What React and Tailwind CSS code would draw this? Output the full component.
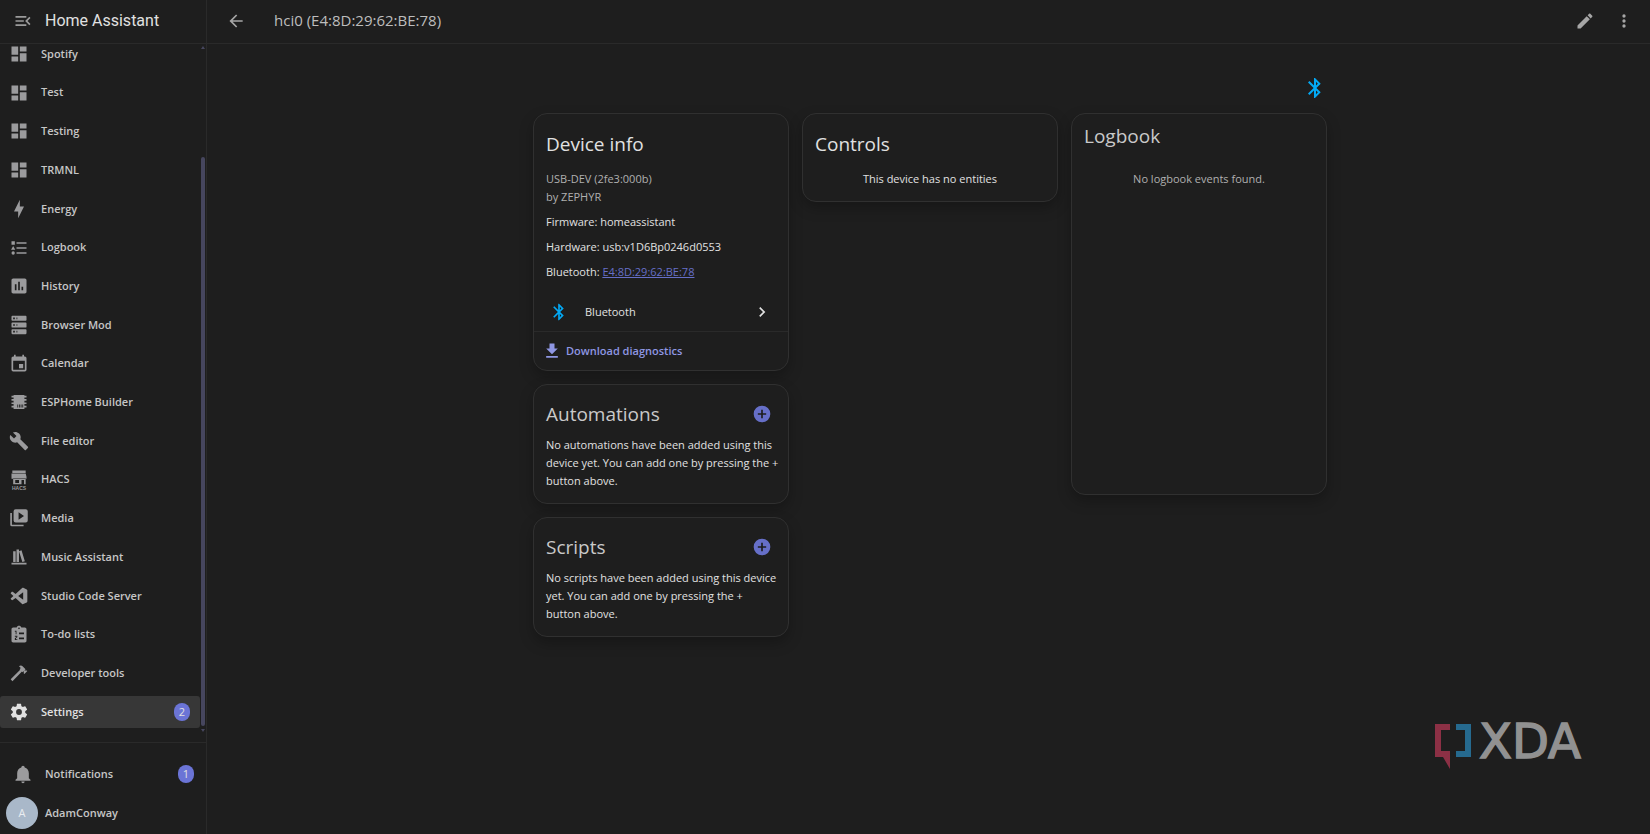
import React from 'react';

const icons = {
  dashboard: 'M13,3V9H21V3M13,21H21V11H13M3,21H11V15H3M3,13H11V3H3V13Z',
  energy: 'M11 15H6L13 1V9H18L11 23V15Z',
  logbook: 'M5,9.5L7.5,14H2.5L5,9.5M3,4H7V8H3V4M5,20A2,2 0 0,0 7,18A2,2 0 0,0 5,16A2,2 0 0,0 3,18A2,2 0 0,0 5,20M9,5V7H21V5H9M9,19H21V17H9V19M9,13H21V11H9V13Z',
  history: 'M19 3H5C3.9 3 3 3.9 3 5V19C3 20.1 3.9 21 5 21H19C20.1 21 21 20.1 21 19V5C21 3.9 20.1 3 19 3M9 17H7V10H9V17M13 17H11V7H13V17M17 17H15V13H17V17Z',
  server: 'M4,1H20A1,1 0 0,1 21,2V6A1,1 0 0,1 20,7H4A1,1 0 0,1 3,6V2A1,1 0 0,1 4,1M4,9H20A1,1 0 0,1 21,10V14A1,1 0 0,1 20,15H4A1,1 0 0,1 3,14V10A1,1 0 0,1 4,9M4,17H20A1,1 0 0,1 21,18V22A1,1 0 0,1 20,23H4A1,1 0 0,1 3,22V18A1,1 0 0,1 4,17M9,5H10V3H9V5M9,13H10V11H9V13M9,21H10V19H9V21M5,3V5H7V3H5M5,11V13H7V11H5M5,19V21H7V19H5Z',
  calendar: 'M19,19H5V8H19M16,1V3H8V1H6V3H5C3.89,3 3,3.89 3,5V19A2,2 0 0,0 5,21H19A2,2 0 0,0 21,19V5C21,3.89 20.1,3 19,3H18V1M17,12H12V17H17V12Z',
  chip: 'M5.500 3.500H18.500V4.500H21V6.500H18.500V8.500H21V10.500H18.500V12.500H21V14.500H18.500V16.500H21V18.500H18.500V20.500H5.500V18.500H3V16.500H5.500V14.500H3V12.500H5.500V10.500H3V8.500H5.500V6.500H3V4.500H5.500V3.500M10 15V18.500H11V15H10M12 15V18.500H13V15H12M14 15V18.500H15V15H14M16 15V18.500H17V15H16Z',
  wrench: 'M22.7,19L13.6,9.9C14.5,7.6 14,4.9 12.1,3C10.1,1 7.1,0.6 4.7,1.7L9,6L6,9L1.6,4.7C0.4,7.1 0.9,10.1 2.9,12.1C4.8,14 7.5,14.5 9.8,13.6L18.9,22.7C19.3,23.1 19.9,23.1 20.3,22.7L22.6,20.4C23.1,20 23.1,19.3 22.7,19Z',
  media: 'M3.500,6H1.500V20A2,2 0 0,0 3.500,22H17.500V20H3.500V6M20,1.500H8A2.500,2.500 0 0,0 5.500,4V15A2.500,2.500 0 0,0 8,17.500H20A2.500,2.500 0 0,0 22.500,15V4A2.500,2.500 0 0,0 20,1.500M11.500,14V5L18,9.5L11.500,14Z',
  bookshelf: 'M9 3V18H12V3H9M12 5L16 18L19 17L15 4L12 5M5 5V18H8V5H5M3 19V21H21V19H3Z',
  vscode: 'M21.29 4.1L17.17 2.12C16.7 1.89 16.13 2 15.76 2.36L7.89 9.53L4.47 6.93C4.15 6.69 3.7 6.71 3.41 6.97L2.31 7.97C1.94 8.3 1.94 8.87 2.31 9.2L5.28 11.9L2.31 14.6C1.94 14.93 1.94 15.5 2.31 15.83L3.41 16.83C3.7 17.1 4.15 17.12 4.47 16.88L7.89 14.27L15.76 21.45C16.13 21.81 16.7 21.91 17.17 21.69L21.29 19.7C21.72 19.5 22 19.06 22 18.58V5.22C22 4.74 21.72 4.3 21.29 4.1M17 16.46L11.03 11.93L17 7.4V16.46Z',
  todo: 'M19 3H14.82C14.4 1.84 13.3 1 12 1S9.6 1.84 9.18 3H5C3.9 3 3 3.9 3 5V19C3 20.1 3.9 21 5 21H19C20.1 21 21 20.1 21 19V5C21 3.9 20.1 3 19 3M12 3A1 1 0 1 1 12 5A1 1 0 1 1 12 3M7 7H9V11H8V8H7V7M10 17V18H7V16L9 14.3V14H7V13H10V14.6L8.4 16V17H10M18 17H12V15H18V17M18 11H12V9H18V11Z',
  hammer: 'M2,19.63L13.43,8.2L12.72,7.5L14.14,6.07L12,3.89C13.2,2.7 15.09,2.7 16.27,3.89L19.87,7.5L18.45,8.91H21.29L22,9.62L18.45,13.21L17.74,12.5V9.62L16.27,11.04L15.56,10.33L4.13,21.76L2,19.63Z',
  cog: 'M12,15.5A3.5,3.5 0 0,1 8.5,12A3.5,3.5 0 0,1 12,8.5A3.5,3.5 0 0,1 15.5,12A3.5,3.5 0 0,1 12,15.5M19.43,12.97C19.47,12.65 19.5,12.33 19.5,12C19.5,11.67 19.47,11.34 19.43,11L21.54,9.37C21.73,9.22 21.78,8.95 21.66,8.73L19.66,5.27C19.54,5.05 19.27,4.96 19.05,5.05L16.56,6.05C16.04,5.66 15.5,5.32 14.87,5.07L14.5,2.42C14.46,2.18 14.25,2 14,2H10C9.75,2 9.54,2.18 9.5,2.42L9.13,5.07C8.5,5.32 7.96,5.66 7.44,6.05L4.95,5.05C4.73,4.96 4.46,5.05 4.34,5.27L2.34,8.73C2.21,8.95 2.27,9.22 2.46,9.37L4.57,11C4.53,11.34 4.5,11.67 4.5,12C4.5,12.33 4.53,12.65 4.57,12.97L2.46,14.63C2.27,14.78 2.21,15.05 2.34,15.27L4.34,18.73C4.46,18.95 4.73,19.03 4.95,18.95L7.44,17.94C7.96,18.34 8.5,18.68 9.13,18.93L9.5,21.58C9.54,21.82 9.75,22 10,22H14C14.25,22 14.46,21.82 14.5,21.58L14.87,18.93C15.5,18.67 16.04,18.34 16.56,17.94L19.05,18.95C19.27,19.03 19.54,18.95 19.66,18.73L21.66,15.27C21.78,15.05 21.73,14.78 21.54,14.63L19.43,12.97Z',
  bell: 'M21,19V20H3V19L5,17V11C5,7.9 7.03,5.17 10,4.29C10,4.19 10,4.1 10,4A2,2 0 0,1 12,2A2,2 0 0,1 14,4C14,4.1 14,4.19 14,4.29C16.97,5.17 19,7.9 19,11V17L21,19M14,21A2,2 0 0,1 12,23A2,2 0 0,1 10,21',
  menuOpen: 'M21,15.61L19.59,17L14.58,12L19.59,7L21,8.39L17.44,12L21,15.61M3,6H16V8H3V6M3,13V11H13V13H3M3,18V16H16V18H3Z',
  back: 'M20,11V13H8L13.5,18.5L12.08,19.92L4.16,12L12.08,4.08L13.5,5.5L8,11H20Z',
  pencil: 'M20.71,7.04C21.1,6.65 21.1,6 20.71,5.63L18.37,3.29C18,2.9 17.35,2.9 16.96,3.29L15.12,5.12L18.87,8.87M3,17.25V21H6.75L17.81,9.93L14.06,6.18L3,17.25Z',
  dots: 'M12,16A2,2 0 0,1 14,18A2,2 0 0,1 12,20A2,2 0 0,1 10,18A2,2 0 0,1 12,16M12,10A2,2 0 0,1 14,12A2,2 0 0,1 12,14A2,2 0 0,1 10,12A2,2 0 0,1 12,10M12,4A2,2 0 0,1 14,6A2,2 0 0,1 12,8A2,2 0 0,1 10,6A2,2 0 0,1 12,4Z',
  bluetooth: 'M14.88,16.29L13,18.17V14.41M13,5.83L14.88,7.71L13,9.58M17.71,7.71L12,2H11V9.58L6.41,5L5,6.41L10.59,12L5,17.58L6.41,19L11,14.41V22H12L17.71,16.29L13.41,12L17.71,7.71Z',
  download: 'M5,20H19V18H5M19,9H15V3H9V9H5L12,16L19,9Z',
  plus: 'M17,13H13V17H11V13H7V11H11V7H13V11H17M12,2A10,10 0 0,0 2,12A10,10 0 0,0 12,22A10,10 0 0,0 22,12A10,10 0 0,0 12,2Z',
  chevron: 'M8.59,16.58L13.17,12L8.59,7.41L10,6L16,12L10,18L8.59,16.58Z',
};

const Icon = ({ name, className = 'size-5' }) => (
  <svg viewBox="0 0 24 24" fill="currentColor" fillRule="evenodd" className={`shrink-0 ${className}`} aria-hidden="true">
    <path d={icons[name]} />
  </svg>
);

// Storefront with the store name under it
const HacsIcon = () => (
  <svg viewBox="0 0 24 24" fill="currentColor" fillRule="evenodd" className="size-5 shrink-0 overflow-visible" aria-hidden="true">
    <path d="M4 0.500H20V3.500H4ZM4 4.300H20L21 8V10.500H3V4.300ZM5 10H20V17H5ZM7.500 12V15.500H12V12ZM15 12V17H18V12Z" />
    <text x="12" y="23.500" textAnchor="middle" fontSize="6" fontWeight="700" fontFamily="Liberation Sans, sans-serif">HACS</text>
  </svg>
);

const navItems = [
  { label: 'Spotify', icon: 'dashboard' },
  { label: 'Test', icon: 'dashboard' },
  { label: 'Testing', icon: 'dashboard' },
  { label: 'TRMNL', icon: 'dashboard' },
  { label: 'Energy', icon: 'energy' },
  { label: 'Logbook', icon: 'logbook' },
  { label: 'History', icon: 'history' },
  { label: 'Browser Mod', icon: 'server' },
  { label: 'Calendar', icon: 'calendar' },
  { label: 'ESPHome Builder', icon: 'chip' },
  { label: 'File editor', icon: 'wrench' },
  { label: 'HACS', icon: 'hacs' },
  { label: 'Media', icon: 'media' },
  { label: 'Music Assistant', icon: 'bookshelf' },
  { label: 'Studio Code Server', icon: 'vscode' },
  { label: 'To-do lists', icon: 'todo' },
  { label: 'Developer tools', icon: 'hammer' },
  { label: 'Settings', icon: 'cog', badge: 2, active: true },
];

const Badge = ({ children }) => (
  <span className="flex h-[18px] w-4 items-center justify-center rounded-full bg-[#6b74d6] text-[11px] font-normal text-[#e1e1e1]">
    {children}
  </span>
);

const Sidebar = () => (
  <aside className="flex w-[207px] shrink-0 flex-col border-r border-[#2a2a2a] text-[11px] font-semibold text-[#c6c6c6]">
    <div className="z-10 flex h-11 shrink-0 items-center gap-3 border-b border-[#2a2a2a] bg-[#1e1e1e] pb-px pl-[13px]">
      <button aria-label="Sidebar toggle" className="text-[#9b9b9b]">
        <Icon name="menuOpen" />
      </button>
      <span className="font-[Roboto,sans-serif] text-base font-normal text-[#e1e1e1]">Home Assistant</span>
    </div>

    <nav className="flex min-h-0 flex-1 gap-px pb-3.5">
      <ul className="-mt-1.5 flex flex-1 flex-col justify-between">
        {navItems.map((item) => (
          <li key={item.label}>
            <a
              href="#"
              className={`flex h-8 items-center gap-3 rounded-[3px] pr-2.5 pl-[9px] ${item.active ? 'bg-[#373737] text-[#e1e1e1]' : ''}`}
            >
              <span className={item.active ? 'text-[#e1e1e1]' : 'text-[#9b9b9d]'}>
                {item.icon === 'hacs' ? <HacsIcon /> : <Icon name={item.icon} />}
              </span>
              <span className="flex-1">{item.label}</span>
              {item.badge && <Badge>{item.badge}</Badge>}
            </a>
          </li>
        ))}
      </ul>
      <div className="-mb-1 flex w-[5px] flex-col items-start pt-0.5 text-[#46465e]" aria-hidden="true">
        <svg viewBox="0 0 4 3" className="h-[3px] w-1" fill="currentColor"><path d="M0 3L2 0L4 3Z" /></svg>
        <div className="mt-[108px] mb-[3px] w-1 flex-1 rounded-full bg-[#46465e]" />
        <svg viewBox="0 0 4 3" className="h-[3px] w-1" fill="currentColor"><path d="M0 0H4L2 3Z" /></svg>
      </div>
    </nav>

    <div className="flex flex-col gap-[7px] border-t border-[#2a2a2a] pt-[15px] pb-[5px]">
      <a href="#" className="flex h-8 items-center gap-3 pr-3 pl-[13px]">
        <span className="text-[#9b9b9d]"><Icon name="bell" /></span>
        <span className="flex-1">Notifications</span>
        <Badge>1</Badge>
      </a>
      <a href="#" className="flex h-8 items-center gap-[7px] pl-1.5">
        <span className="flex size-8 items-center justify-center rounded-full bg-[#a9b8c9] font-normal text-[#e9edf1]">A</span>
        AdamConway
      </a>
    </div>
  </aside>
);

const Card = ({ className = '', children }) => (
  <section className={`rounded-[14px] border border-[#303030] bg-[#1e1e1e] shadow-[0_6px_14px_rgba(0,0,0,0.25)] ${className}`}>
    {children}
  </section>
);

const EmptyCard = ({ title, text }) => (
  <Card className="pt-[15px] pr-2 pb-[13px] pl-3">
    <div className="flex items-center justify-between pr-2">
      <h2 className="text-[19px] leading-7 text-[#c9c9c9]">{title}</h2>
      <button aria-label={`Add ${title}`} className="text-[#666fc8]">
        <Icon name="plus" />
      </button>
    </div>
    <p className="mt-2 leading-[18px]">{text}</p>
  </Card>
);

const XdaLogo = () => (
  <svg viewBox="0 0 156 48" className="h-12 w-[156px] overflow-visible" role="img" aria-label="XDA">
    <path d="M0 0H15V6H6V27H15V45L8 33H0Z" fill="#8c3045" />
    <path d="M21 0H36V33H21V27H30V6H21Z" fill="#266a8f" />
    <text x="44" y="34" fontSize="48" fontFamily="DejaVu Sans, sans-serif" fill="#919191" stroke="#919191" strokeWidth="1.5">XDA</text>
  </svg>
);

const App = () => (
  <div className="flex h-screen min-h-[780px] bg-[#1e1e1e] font-['Open_Sans',sans-serif] text-[11px] text-[#e1e1e1]">
    <Sidebar />
    <div className="relative flex min-w-0 flex-1 flex-col">
      <header className="flex h-11 shrink-0 items-center border-b border-[#2a2a2a] pr-4 pb-0.5 pl-[19px] text-[#a6a6a6]">
        <button aria-label="Back"><Icon name="back" /></button>
        <h1 className="ml-7 flex-1 text-[15px] text-[#bdbdbd]">hci0 (E4:8D:29:62:BE:78)</h1>
        <button aria-label="Edit"><Icon name="pencil" /></button>
        <button aria-label="Menu" className="ml-[19px]"><Icon name="dots" /></button>
      </header>

      <main className="flex-1 pt-8 pl-[3px]">
        <div className="mx-auto max-w-[794px]">
          <div className="mb-[13px] flex justify-end text-[#03a9f4]">
            <Icon name="bluetooth" className="size-6" />
          </div>
          <div className="grid grid-cols-3 items-start gap-[13px]">
            <div className="flex flex-col gap-[13px]">
              <Card>
                <div className="px-3 pt-4">
                  <h2 className="text-[19px] leading-7">Device info</h2>
                  <div className="mt-3 leading-[18px] text-[#b0b0b0]">
                    <p>USB-DEV (2fe3:000b)</p>
                    <p>by ZEPHYR</p>
                  </div>
                  <div className="mt-[7px] flex flex-col gap-[7px] leading-[18px]">
                    <p>Firmware: homeassistant</p>
                    <p>Hardware: usb:v1D6Bp0246d0553</p>
                    <p>Bluetooth: <a href="#" className="text-[#666fc8] underline">E4:8D:29:62:BE:78</a></p>
                  </div>
                </div>
                <a href="#" className="mt-3 flex h-[38px] items-center pr-4 pl-[15px]">
                  <span className="text-[#03a9f4]"><Icon name="bluetooth" /></span>
                  <span className="ml-4 flex-1">Bluetooth</span>
                  <Icon name="chevron" />
                </a>
                <div className="flex h-[39px] items-center border-t border-[#2a2a2a] px-2">
                  <button className="flex items-center gap-1 font-semibold text-[#8f97e3]">
                    <Icon name="download" />
                    Download diagnostics
                  </button>
                </div>
              </Card>
              <EmptyCard title="Automations" text="No automations have been added using this device yet. You can add one by pressing the + button above." />
              <EmptyCard title="Scripts" text="No scripts have been added using this device yet. You can add one by pressing the + button above." />
            </div>

            <Card className="px-3 pt-4 pb-[13px]">
              <h2 className="text-[19px] leading-7">Controls</h2>
              <p className="mt-3 text-center leading-[18px]">This device has no entities</p>
            </Card>

            <Card className="min-h-[382px] px-3 pt-2">
              <h2 className="text-[19px] leading-7 text-[#c9c9c9]">Logbook</h2>
              <p className="mt-5 text-center leading-[18px] text-[#b0b0b0]">No logbook events found.</p>
            </Card>
          </div>
        </div>
      </main>

      <div className="absolute right-[59px] bottom-[62px]">
        <XdaLogo />
      </div>
    </div>
  </div>
);

export default App;
